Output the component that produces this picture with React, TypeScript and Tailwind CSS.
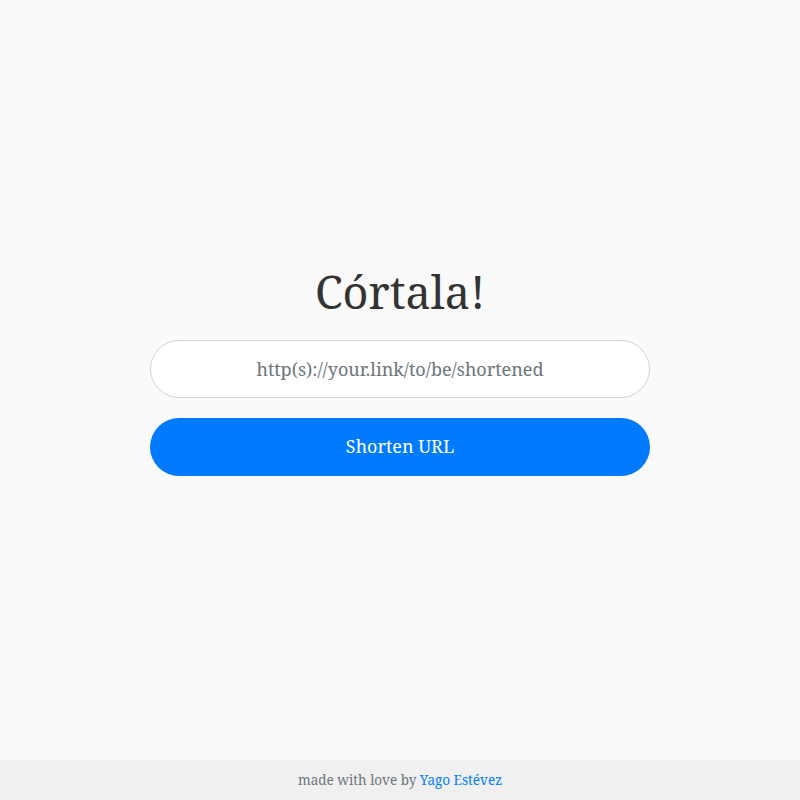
import { useState } from "react";

const serif = "font-['Noto_Serif','DejaVu_Serif',serif]";

export default function App() {
  const [url, setUrl] = useState("");

  return (
    <div className={`${serif} min-h-screen flex flex-col bg-[#fafafa]`}>
      <main className="flex-1 flex flex-col items-center justify-center pb-[16px]">
        <h1 className="text-[45px] leading-none text-[#333] mb-[26px]">Córtala!</h1>
        <form
          className="w-[500px] flex flex-col gap-[20px]"
          onSubmit={(e) => e.preventDefault()}
        >
          <input
            value={url}
            onChange={(e) => setUrl(e.target.value)}
            placeholder="http(s)://your.link/to/be/shortened"
            className="h-[58px] w-full rounded-full border border-[#ced4da] bg-white px-6 text-center text-[18px] text-[#495057] placeholder:text-[#6c757d] outline-none"
          />
          <button
            type="submit"
            className="h-[58px] w-full rounded-full bg-[#007bff] text-[18px] text-white"
          >
            Shorten URL
          </button>
        </form>
      </main>
      <footer className="h-[40px] flex items-center justify-center bg-[#f0f0f0] text-[13.5px] text-[#6c757d]">
        <span>
          made with love by{" "}
          <a href="#" className="text-[#007bff]">
            Yago Estévez
          </a>
        </span>
      </footer>
    </div>
  );
}
